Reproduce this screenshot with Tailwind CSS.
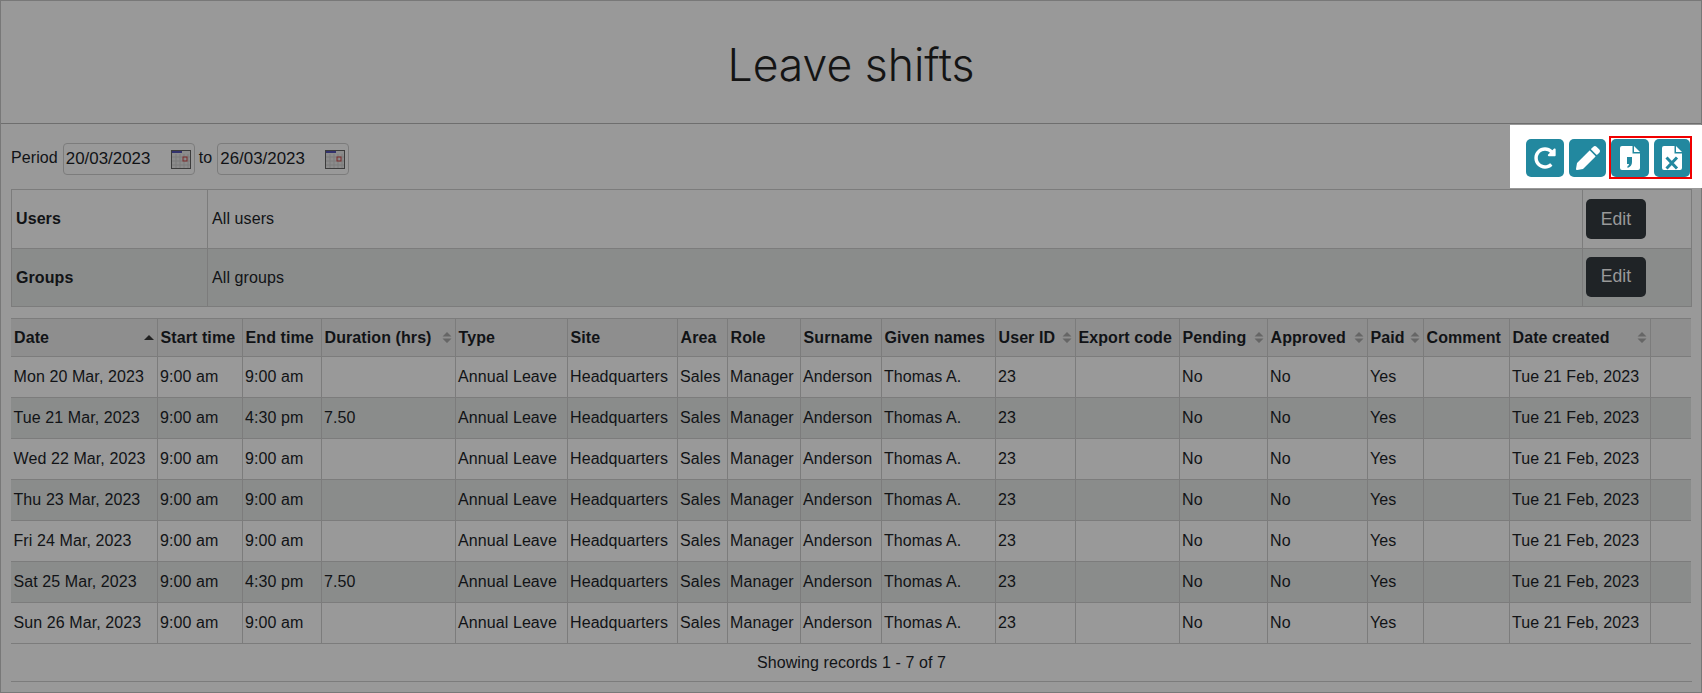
<!DOCTYPE html>
<html lang="en">
<head>
    <meta charset="UTF-8">
    <title>Leave shifts</title>
    <script src="https://cdn.jsdelivr.net/npm/@tailwindcss/browser@4"></script>
</head>
<body class="bg-[#999999] font-['Liberation_Sans',Arial,sans-serif] text-[16px] tracking-[0.09px] text-[#111316] overflow-hidden">
    <div class="h-[693px] border border-[#787878] flex flex-col">
        <!-- page title -->
        <header class="h-[123px] shrink-0 border-b border-[#6e6e6e] flex items-center justify-center">
            <h1 class="font-['Inter',sans-serif] font-light text-[44.500px] leading-none tracking-normal text-[#141414] pt-[7px]">Leave shifts</h1>
        </header>

        <!-- period + toolbar -->
        <div class="h-[65px] shrink-0 flex justify-between pl-[10px]">
            <div class="flex items-start gap-[5px] pt-[19px]">
                <span class="leading-[30px]">Period</span>
                <div class="w-[132px] h-[32px] border border-[#7c7c7c] rounded-[4px] flex items-center justify-between pl-[2px] pr-[3px] text-[16.900px] tracking-normal">
                    <span>20/03/2023</span>
                    <svg width="20" height="19" viewBox="0 0 20 19"><rect x=".5" y=".5" width="19" height="18" fill="#8c8c8c" stroke="#3c3c3c"/><rect x="1" y="1" width="10" height="2" fill="#33336e"/><path d="M1 7h18M1 11h18M1 15h18M5 4v14M9 4v14M13 4v14M17 4v14" stroke="#7c7c7c"/><rect x="12" y="7" width="4" height="4" fill="none" stroke="#7c2a2a"/></svg>
                </div>
                <span class="leading-[30px] -ml-px">to</span>
                <div class="w-[132px] h-[32px] border border-[#7c7c7c] rounded-[4px] flex items-center justify-between pl-[2px] pr-[3px] text-[16.900px] tracking-normal">
                    <span>26/03/2023</span>
                    <svg width="20" height="19" viewBox="0 0 20 19"><rect x=".5" y=".5" width="19" height="18" fill="#8c8c8c" stroke="#3c3c3c"/><rect x="1" y="1" width="10" height="2" fill="#33336e"/><path d="M1 7h18M1 11h18M1 15h18M5 4v14M9 4v14M13 4v14M17 4v14" stroke="#7c7c7c"/><rect x="12" y="7" width="4" height="4" fill="none" stroke="#7c2a2a"/></svg>
                </div>
            </div>

            <div class="w-[192px] h-[63px] mt-[1px] -mr-px bg-white flex items-center pl-[16px] pt-[2px]">
                <button class="w-[38px] h-[38px] rounded-[5px] bg-[#22889f] flex items-center justify-center">
                    <svg width="22" height="22" viewBox="0 0 512 512" fill="#fff"><path d="M256.455 8c66.269.119 126.437 26.233 170.859 68.685l35.715-35.715C478.149 25.851 504 36.559 504 57.941V192c0 13.255-10.745 24-24 24H345.941c-21.382 0-32.090-25.851-16.971-40.971l41.750-41.750c-30.864-28.899-70.801-44.907-113.230-45.273-92.398-.798-170.283 73.977-169.484 169.442C88.764 348.009 162.184 424 256 424c41.127 0 79.997-14.678 110.629-41.556 4.743-4.161 11.906-3.908 16.368.553l39.662 39.662c4.872 4.872 4.631 12.815-.482 17.433C378.202 479.813 319.926 504 256 504 119.034 504 8.001 392.967 8 256.002 7.999 119.193 119.646 7.755 256.455 8z"/></svg>
                </button>
                <button class="w-[37px] h-[38px] ml-[5px] rounded-[5px] bg-[#22889f] flex items-center justify-center">
                    <svg width="24" height="24" viewBox="0 0 512 512" fill="#fff"><path d="M497.900 142.100l-46.100 46.100c-4.700 4.700-12.300 4.700-17 0l-111-111c-4.700-4.700-4.700-12.300 0-17l46.100-46.100c18.700-18.700 49.100-18.700 67.900 0l60.100 60.100c18.800 18.700 18.800 49.100 0 67.900zM284.200 99.800L21.600 362.400.4 483.900c-2.900 16.400 11.400 30.600 27.800 27.800l121.500-21.300 262.600-262.600c4.700-4.700 4.700-12.300 0-17l-111-111c-4.800-4.700-12.400-4.700-17.100 0z"/></svg>
                </button>
                <div class="w-[83px] h-[43px] ml-[3px] border-2 border-[#f00000] flex items-center gap-[5px]">
                    <button class="w-[38px] h-[38px] rounded-[5px] bg-[#22889f] flex items-center justify-center">
                        <svg width="20" height="24" viewBox="0 0 20 24"><path d="M2 0h10.500v7.500H20V22a2 2 0 0 1-2 2H2a2 2 0 0 1-2-2V2a2 2 0 0 1 2-2z" fill="#fff"/><path d="M14 0l6 6h-6z" fill="#fff"/><path d="M7 11h5v5c0 3-1.500 5-4.500 6v-2c1-.4 1.500-1.200 1.500-2H7z" fill="#22889f"/></svg>
                    </button>
                    <button class="w-[36px] h-[38px] rounded-[5px] bg-[#22889f] flex items-center justify-center">
                        <svg width="20" height="24" viewBox="0 0 20 24"><path d="M2 0h10.500v7.500H20V22a2 2 0 0 1-2 2H2a2 2 0 0 1-2-2V2a2 2 0 0 1 2-2z" fill="#fff"/><path d="M14 0l6 6h-6z" fill="#fff"/><path d="M4.500 11.500l10.500 11M15 11.500L4.500 22.500" stroke="#22889f" stroke-width="3" fill="none"/></svg>
                    </button>
                </div>
            </div>
        </div>

        <!-- users / groups filter -->
        <div class="pl-[10px] pr-[9px]">
            <table class="w-[1680px] table-fixed border-collapse border border-[#7c7c7c]">
                <colgroup>
                    <col class="w-[196px]">
                    <col class="w-[1375px]">
                    <col class="w-[109px]">
                </colgroup>
                <tr class="h-[59px] border-b border-[#7c7c7c]">
                    <td class="border-r border-[#7c7c7c] px-[4px] font-bold">Users</td>
                    <td class="border-r border-[#7c7c7c] px-[4px]">All users</td>
                    <td class="px-[3px]"><button class="w-[60px] h-[40px] rounded-[5px] bg-[#1f2326] text-[#999999] text-[17.600px]">Edit</button></td>
                </tr>
                <tr class="h-[58px] bg-[#8a8c8b]">
                    <td class="border-r border-[#7c7c7c] px-[4px] font-bold">Groups</td>
                    <td class="border-r border-[#7c7c7c] px-[4px]">All groups</td>
                    <td class="px-[3px] pb-[2px]"><button class="w-[60px] h-[40px] rounded-[5px] bg-[#1f2326] text-[#999999] text-[17.600px]">Edit</button></td>
                </tr>
            </table>
        </div>

        <!-- shifts table -->
        <div class="pl-[10px] pr-[9px] mt-[11px]">
            <table class="w-[1680px] table-fixed border-collapse">
                <colgroup>
                    <col class="w-[146px]"><col class="w-[85px]"><col class="w-[79px]"><col class="w-[134px]"><col class="w-[112px]"><col class="w-[110px]"><col class="w-[50px]"><col class="w-[73px]"><col class="w-[81px]"><col class="w-[114px]"><col class="w-[80px]"><col class="w-[104px]"><col class="w-[88px]"><col class="w-[100px]"><col class="w-[56px]"><col class="w-[86px]"><col class="w-[141px]"><col class="w-[41px]">
                </colgroup>
                <thead>
                    <tr id="head" class="h-[38px] bg-[#8e8e8e] border-y border-[#7c7c7c]"></tr>
                </thead>
                <tbody id="rows"></tbody>
            </table>
            <div class="h-[38px] flex items-center justify-center border-b border-[#7c7c7c]">Showing records 1 - 7 of 7</div>
        </div>
    </div>

    <script>
        const sortBoth = '<svg width="10" height="11" viewBox="0 0 10 11" class="shrink-0"><path d="M5 0l4.500 4.500H.5zM5 11L.5 6.500h9z" fill="#666666"/></svg>';
        const sortAsc = '<svg width="10" height="5" viewBox="0 0 10 5" class="shrink-0"><path d="M5 0l5 5H0z" fill="#222222"/></svg>';

        const columns = [
            ['Date', sortAsc], ['Start time'], ['End time'], ['Duration (hrs)', sortBoth], ['Type'], ['Site'],
            ['Area'], ['Role'], ['Surname'], ['Given names'], ['User ID', sortBoth], ['Export code'],
            ['Pending', sortBoth], ['Approved', sortBoth], ['Paid', sortBoth], ['Comment'], ['Date created', sortBoth], ['']
        ];

        const shifts = [
            ['Mon 20 Mar, 2023', '9:00 am', ''],
            ['Tue 21 Mar, 2023', '4:30 pm', '7.50'],
            ['Wed 22 Mar, 2023', '9:00 am', ''],
            ['Thu 23 Mar, 2023', '9:00 am', ''],
            ['Fri 24 Mar, 2023', '9:00 am', ''],
            ['Sat 25 Mar, 2023', '4:30 pm', '7.50'],
            ['Sun 26 Mar, 2023', '9:00 am', '']
        ];

        document.getElementById('head').innerHTML = columns.map(([label, icon], i) =>
            `<th class="${i < 17 ? 'border-r border-[#7c7c7c]' : ''} px-[3px] text-left font-bold whitespace-nowrap overflow-hidden">
                <div class="flex items-center justify-between">${label}${icon || ''}</div>
            </th>`).join('');

        document.getElementById('rows').innerHTML = shifts.map(([date, end, hours], r) => {
            const cells = [date, '9:00 am', end, hours, 'Annual Leave', 'Headquarters', 'Sales', 'Manager', 'Anderson',
                'Thomas A.', '23', '', 'No', 'No', 'Yes', '', 'Tue 21 Feb, 2023', ''];
            return `<tr class="h-[41px] border-b border-[#7c7c7c] ${r % 2 ? 'bg-[#8a8c8b]' : ''}">` + cells.map((text, i) =>
                `<td class="${i < 17 ? 'border-r border-[#7c7c7c]' : ''} px-[2.500px] whitespace-nowrap overflow-hidden">${text}</td>`).join('') + '</tr>';
        }).join('');
    </script>
</body>
</html>
